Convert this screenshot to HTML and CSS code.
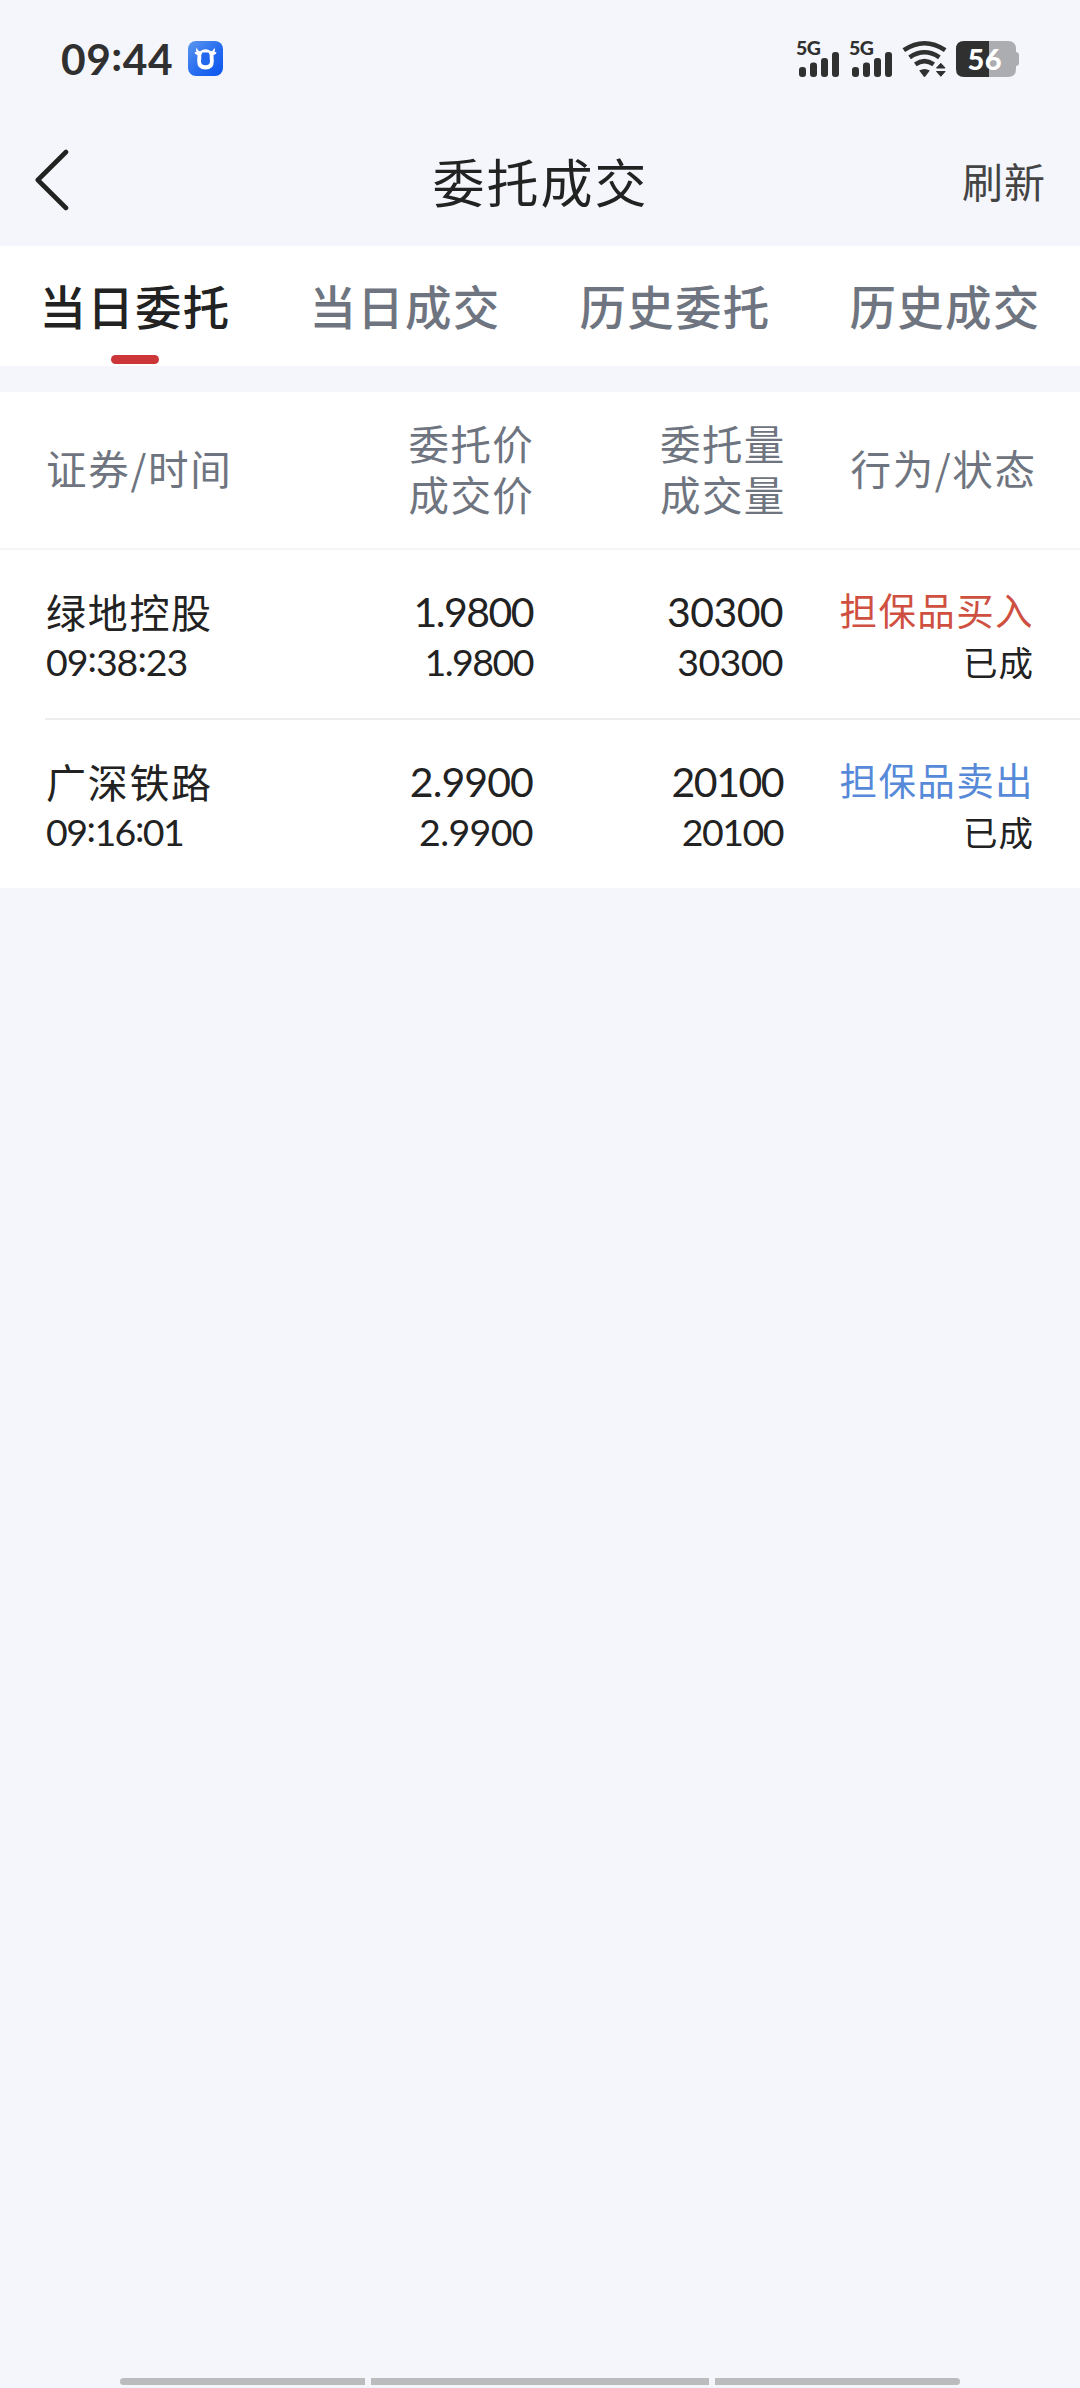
FILE: index.html
```html
<!DOCTYPE html>
<html lang="zh-CN">
<head>
<meta charset="utf-8">
<title>委托成交</title>
<link rel="stylesheet" href="styles.css">
</head>
<body>
<div class="status">
  <span class="clock">09<i class="colon">:</i>44</span>
  <svg class="app-icon" width="35" height="35" viewBox="0 0 35 35">
    <defs><linearGradient id="blue" x1="0" y1="0" x2="1" y2="1"><stop offset="0" stop-color="#5c97ee"/><stop offset="0.5" stop-color="#2a6ff0"/><stop offset="1" stop-color="#0a55ee"/></linearGradient></defs>
    <rect width="35" height="35" rx="8" fill="url(#blue)"/>
    <path d="M9 6.3 Q8.8 9.5 12 10.3 Q17.5 6.300 23 10.3 Q26.200 9.5 26 6.300 Q27.600 8.500 26.500 11 L28.500 11.200 Q28 14.200 25.500 14 Q25.600 17 25.800 20 Q26 28.500 17.500 28.500 Q9 28.500 9.200 20 Q9.400 17 9.500 14 Q7 14.200 6.500 11.200 L8.500 11 Q7.400 8.500 9 6.300Z" fill="#fff"/>
    <path d="M14.500 11.500 L20.500 11.500 Q22 13 21.700 17 L22 20 Q22 24.300 17.500 24.300 Q13 24.300 13 20 L13.300 17 Q13 13 14.500 11.500Z" fill="#2268ef"/>
  </svg>
  <svg class="system-icons" width="224" height="38" viewBox="0 0 224 38">
    <g fill="#303030">
      <text class="net" x="0" y="14.500" textLength="25">5G</text>
      <rect x="3" y="27" width="7" height="10" rx="3"/>
      <rect x="14" y="22.500" width="7" height="14.500" rx="3"/>
      <rect x="25" y="18" width="7" height="19" rx="3"/>
      <rect x="36" y="12" width="7" height="25" rx="3"/>
      <text class="net" x="53" y="14.500" textLength="25">5G</text>
      <rect x="56" y="27" width="7" height="10" rx="3"/>
      <rect x="67" y="22.500" width="7" height="14.500" rx="3"/>
      <rect x="78" y="18" width="7" height="19" rx="3"/>
      <rect x="89" y="12" width="7" height="25" rx="3"/>
      <path d="M123.200 30.500 Q128.500 27.500 133.800 30.500 L129.500 36.300 Q128.500 37.500 127.500 36.300Z"/>
      <path d="M140.500 28 L144.800 23.300 L149.100 28Z M140.500 31.500 L149.100 31.500 L144.800 36.300Z" stroke="#303030" stroke-width="1"/>
    </g>
    <g fill="none" stroke="#303030" stroke-width="4.600">
      <path d="M107.800 10.200 Q128.500 -3.700 149.200 10.200"/>
      <path d="M113.600 17.300 Q128.500 7.200 143.400 17.300"/>
      <path d="M119.300 24.300 Q128.500 18 137.700 24.300"/>
    </g>
    <path d="M168 1 H193 V37 H168 Q160 37 160 29 V9 Q160 1 168 1Z" fill="#303030"/>
    <path d="M193 1 H212 Q220 1 220 9 V12 Q223 12.500 223 15 V23 Q223 25.500 220 26 V29 Q220 37 212 37 H193Z" fill="#acadb1"/>
    <text class="level" x="171.500" y="29.500" textLength="34">56</text>
  </svg>
</div>
<header class="nav">
  <svg class="back" width="34" height="62" viewBox="0 0 34 62"><path d="M31 3 L2.800 31 L31 59" fill="none" stroke="#222" stroke-width="4.600" stroke-linecap="round" stroke-linejoin="round"/></svg>
  <h1 class="title">委托成交</h1>
  <span class="refresh">刷新</span>
</header>
<nav class="tabs">
  <span class="tab active">当日委托</span>
  <span class="tab">当日成交</span>
  <span class="tab">历史委托</span>
  <span class="tab">历史成交</span>
</nav>
<main class="orders">
  <div class="grid head">
    <div class="security">证券/时间</div>
    <div class="right">委托价<br>成交价</div>
    <div class="right qty">委托量<br>成交量</div>
    <div class="right state">行为/状态</div>
  </div>
  <div class="grid row">
    <div><div class="name">绿地控股</div><div class="num small time">09<i class="colon">:</i>38<i class="colon">:</i>23</div></div>
    <div class="right"><div class="num tighter">1.9800</div><div class="num small tighter">1.9800</div></div>
    <div class="right"><div class="num">30300</div><div class="num small">30300</div></div>
    <div class="right"><div class="action buy">担保品买入</div><div class="done">已成</div></div>
  </div>
  <div class="divider"></div>
  <div class="grid row">
    <div><div class="name">广深铁路</div><div class="num small tighter">09<i class="colon">:</i>16<i class="colon">:</i>01</div></div>
    <div class="right"><div class="num tight">2.9900</div><div class="num small">2.9900</div></div>
    <div class="right"><div class="num tighter">20100</div><div class="num small tighter">20100</div></div>
    <div class="right"><div class="action sell">担保品卖出</div><div class="done">已成</div></div>
  </div>
</main>
<div class="home-bar"><span></span><span></span><span></span></div>
</body>
</html>
```

FILE: styles.css
```css
* { box-sizing: border-box; }
body {
  margin: 0;
  width: 1080px;
  height: 2388px;
  display: flex;
  flex-direction: column;
  background: #f4f6fb;
  color: #222;
  font-family: "Noto Sans CJK SC", sans-serif;
  overflow: hidden;
}
.status {
  height: 117px;
  padding: 0 60px 0 61px;
  display: flex;
  align-items: center;
}
.clock {
  width: 127px;
  font: 700 42.500px/50px Lato, sans-serif;
  letter-spacing: 0.500px;
  color: #303030;
  white-space: nowrap;
}
.colon { font-style: normal; position: relative; top: -4px; }
.system-icons { margin-left: auto; overflow: visible; }
.net { font: 900 19.500px Lato, sans-serif; }
.level { font: 900 29px Lato, sans-serif; fill: #fff; }
.nav {
  height: 129px;
  padding: 0 34px 4px 35px;
  display: grid;
  grid-template-columns: 1fr auto 1fr;
  align-items: center;
}
.title {
  margin: 0;
  padding-top: 2px;
  font-size: 52px;
  line-height: 60px;
  font-weight: 400;
  letter-spacing: 2px;
}
.refresh {
  justify-self: end;
  font-size: 41px;
  line-height: 60px;
  letter-spacing: 1px;
  color: #444;
}
.tabs {
  height: 120px;
  display: grid;
  grid-template-columns: repeat(4, 1fr);
  background: #fff;
}
.tab {
  display: flex;
  flex-direction: column;
  align-items: center;
  font-size: 46.500px;
  line-height: 109px;
  font-weight: 500;
  letter-spacing: 1.200px;
  color: #6f7580;
  padding-top: 4px;
}
.active { color: #222; }
.active::after {
  content: "";
  width: 48px;
  height: 9px;
  margin-top: -4px;
  border-radius: 5px;
  background: #cd3638;
}
.orders { margin-top: 26px; background: #fff; }
.grid {
  display: grid;
  grid-template-columns: 238px 250px 250px 250px;
  padding: 0 46px;
}
.right { text-align: right; }
.head {
  height: 158px;
  padding-bottom: 4px;
  align-items: center;
  border-bottom: 2px solid #f5f5f5;
  font-size: 40.500px;
  line-height: 51px;
  letter-spacing: 1.300px;
  color: #6f7580;
  white-space: nowrap;
}
.security { letter-spacing: 1.700px; padding-bottom: 1px; }
.qty { margin-right: -1.500px; }
.state { margin-right: -2.500px; padding-bottom: 1px; letter-spacing: 1.600px; }
.row { height: 168px; padding-top: 36px; line-height: 50px; white-space: nowrap; }
.name { font-size: 40px; letter-spacing: 1.700px; }
.num {
  padding-right: 1px;
  font: 400 41px/50px Lato, sans-serif;
  letter-spacing: -0.600px;
  position: relative;
  top: 1px;
}
.small { font-size: 37.500px; }
.tight { letter-spacing: -0.900px; }
.tighter { letter-spacing: -1.500px; }
.time { letter-spacing: -1px; }
.action { font-size: 37.500px; letter-spacing: 1.400px; position: relative; top: -2px; }
.done { font-size: 34.500px; letter-spacing: 1px; }
.buy { color: #cf5040; }
.sell { color: #568ad8; }
.divider { height: 2px; margin-left: 45px; background: #ededed; }
.home-bar {
  margin: auto 120px 3px;
  height: 7px;
  display: grid;
  grid-template-columns: 245px 338px 245px;
  gap: 6px;
}
.home-bar span { background: #bbbcbe; }
.home-bar span:first-child { border-radius: 4px 0 0 4px; }
.home-bar span:last-child { border-radius: 0 4px 4px 0; }
```
